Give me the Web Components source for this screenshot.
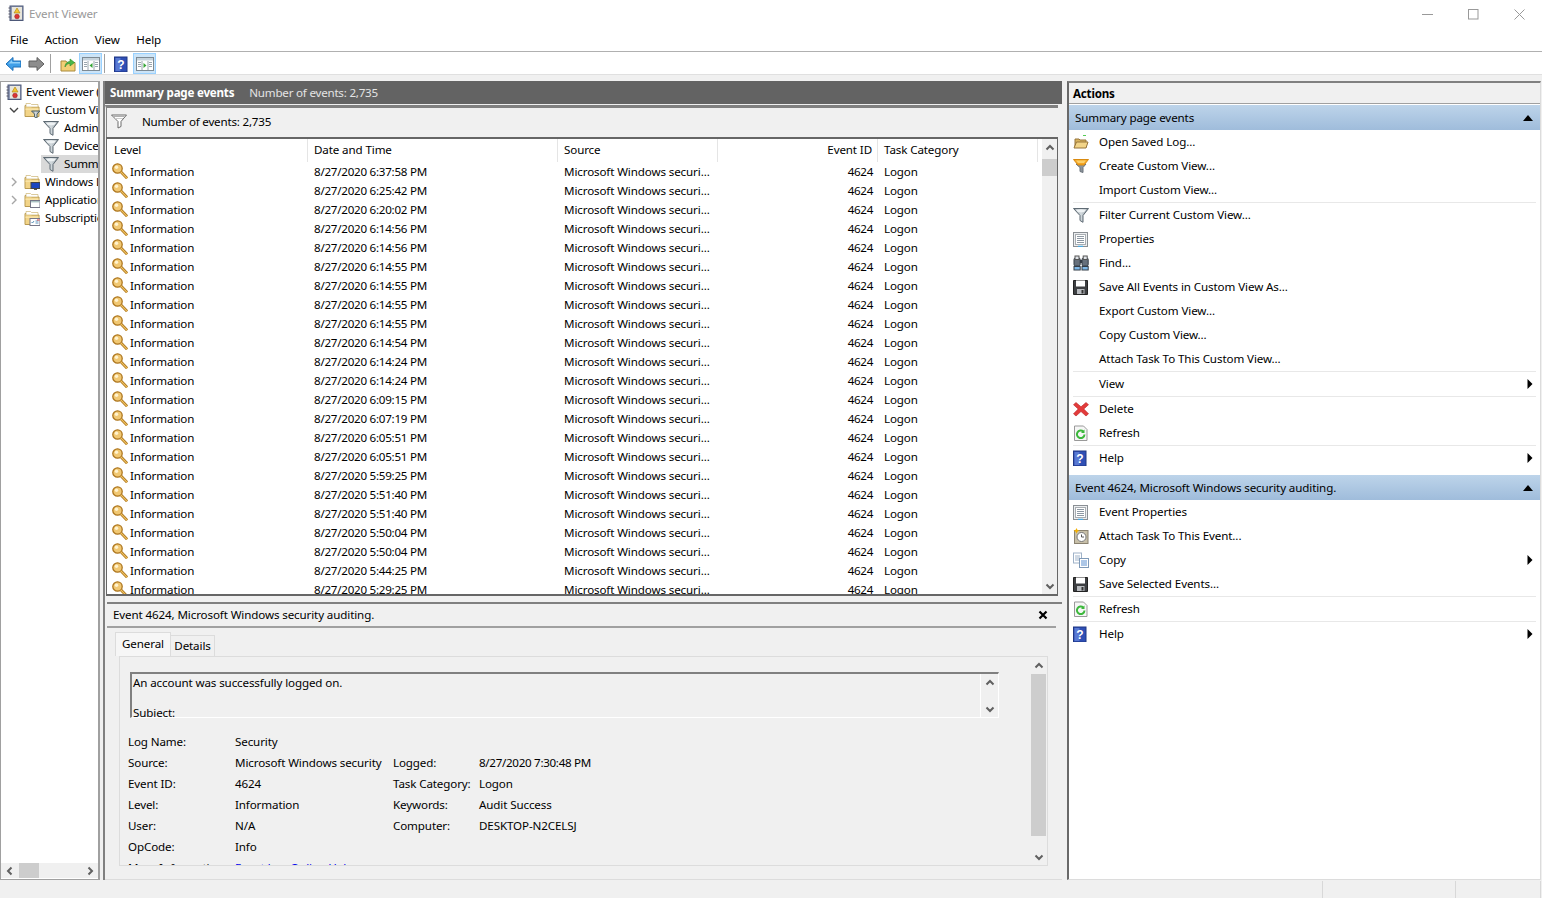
<!DOCTYPE html>
<html><head><meta charset="utf-8"><title>Event Viewer</title>
<style>
html,body{margin:0;padding:0;width:1542px;height:898px;overflow:hidden;background:#f0f0f0;font:11.6px/16px "Noto Sans",sans-serif;color:#000;letter-spacing:-.12px}
ev-app{display:flex}
</style></head><body>
<ev-app></ev-app>
<script>
const GR=`<defs><linearGradient id="fg" x1="0" x2="1" y1="0" y2="0"><stop offset="0" stop-color="#7d8a93"/><stop offset=".5" stop-color="#d5dce0"/><stop offset="1" stop-color="#79858e"/></linearGradient></defs>`;
const FOLD=`<path d="M1 3.500h5l1.500 1.500H15v9.500H1z" fill="#f2d488" stroke="#b99a50"/><path d="M2 5V1.500h4.500l1 1H14V5z" fill="#fff" stroke="#cdb474" stroke-width=".7"/><path d="M1.500 6.500h13v1.500h-13z" fill="#f8e3a6"/>`;
const ICONS={
key:`<circle cx="5.500" cy="5.500" r="4.700" fill="#f1c873" stroke="#ad751c" stroke-width="1.300"/><circle cx="4.500" cy="4.300" r="1.700" fill="#fff3cf"/><path d="M8.800 8.800l6.300 6.500" stroke="#ad751c" stroke-width="2.800"/><path d="M8.800 8.800l6.300 6.500" stroke="#f3c866" stroke-width="1.100"/>`,
funnel:GR+`<path d="M.5 1.500h15L10 8.500v6.800L7 13.500v-5z" fill="url(#fg)" stroke="#5f6b74"/><path d="M2.500 2.500h11L11 5.200H5z" fill="#eef2f4"/>`,
funnelO:`<path d="M3 6h10l-3 3.500v5l-3-1v-4z" fill="#8b949c" stroke="#6c747c"/><path d="M.5 1.500h15L11 7H5z" fill="#f5a623" stroke="#d98a10"/><path d="M3 2.500h10L11 5H5z" fill="#fbd06a"/>`,
funnelL:`<path d="M.5 1h15L10 7.500v5L7 14V7.500z" fill="#fff" stroke="#6a6a6a"/><path d="M2.500 2.500h11" stroke="#b0b0b0"/><path d="M4 4.500h8" stroke="#ccc"/>`,
viewer:`<rect x="2" y="1" width="13" height="14.500" fill="#8d97b3" stroke="#4d5878"/><rect x="4" y="2" width="10" height="12.500" fill="#e8e6dc"/><path d="M9 3l3 5H6z" fill="#f4c430" stroke="#a98310" stroke-width=".6"/><circle cx="9" cy="11.500" r="2.300" fill="#d33" stroke="#922" stroke-width=".6"/><path d="M2.500 3h-2M2.500 6h-2M2.500 9h-2M2.500 12h-2" stroke="#556"/>`,
folderF:FOLD+GR+`<path d="M7.500 9h8.500l-3 3v4l-2.500-1v-3z" fill="url(#fg)" stroke="#566"/>`,
folderW:FOLD+`<rect x="7" y="8.500" width="9" height="6" fill="#1b46c0" stroke="#444"/><path d="M10 15h3v1h-3z" fill="#555"/>`,
folderA:FOLD+`<rect x="6.500" y="8.500" width="9.500" height="7" fill="#fff" stroke="#778"/><path d="M7 9.800h8.500" stroke="#8aa"/>`,
folderS:FOLD+`<rect x="6" y="8.500" width="10" height="7" fill="#fff" stroke="#778"/><path d="M7.500 12l1 1 1.500-2M11.500 11h3M11.500 13h3" stroke="#37a" fill="none" stroke-width=".8"/><path d="M13 9.500h2.500v1H13z" fill="#d33"/>`,
open:`<path d="M2 5h4l1 1h6v7.500H2z" fill="#d9b45f" stroke="#96743a"/><path d="M1 14l2.500-6H15l-2 6z" fill="#f2d488" stroke="#96743a"/><path d="M10 1.500h3" stroke="#5c5"/>`,
props:`<rect x=".5" y="1.500" width="14" height="14" fill="#eceef0" stroke="#8a8f94"/><rect x="2.500" y="3.500" width="10" height="10" fill="#fff" stroke="#a8adb2"/><path d="M4 5.500h7M4 7.500h7M4 9.500h7M4 11.500h7" stroke="#8d98a3"/><path d="M5 15.500h5" stroke="#4aa8e0" stroke-width="1.500"/>`,
find:`<rect x="1" y="3" width="6.200" height="8" rx="1.500" fill="#66707c" stroke="#333c46"/><rect x="9" y="3" width="6.200" height="8" rx="1.500" fill="#66707c" stroke="#333c46"/><path d="M7 5h2v3H7z" fill="#333c46"/><rect x="2" y="1" width="4" height="3.500" fill="#dfe3e8" stroke="#555"/><rect x="10.200" y="1" width="4" height="3.500" fill="#dfe3e8" stroke="#555"/><rect x="1" y="11.500" width="6.200" height="3.500" fill="#7fb8e8" stroke="#333c46"/><rect x="9" y="11.500" width="6.200" height="3.500" fill="#7fb8e8" stroke="#333c46"/>`,
save:`<path d="M.5 1.500h14v14H.5z" fill="#3d3f42" stroke="#222"/><rect x="3" y="1.500" width="9" height="6" fill="#fff"/><rect x="4" y="10" width="7.500" height="5" fill="#b9bcc0"/><rect x="8.500" y="11" width="2" height="3.500" fill="#333"/>`,
del:`<path d="M3 1.500l5 4.300 5-4.300 2.500 2.200L10.800 8l4.700 4.800L13 15l-5-4.500L3 15 .5 12.800 5.200 8 .5 3.700z" fill="#e33b3b" stroke="#b92525" stroke-width=".6"/>`,
refresh:`<path d="M1.500 1h9l3.500 3.500V15.500H1.500z" fill="#f6f6f6" stroke="#999"/><path d="M11.500 9.500a3.800 3.800 0 1 1-1.200-3" fill="none" stroke="#3cb83c" stroke-width="2"/><path d="M11.500 4.500v3.500H8z" fill="#3cb83c"/>`,
help:`<rect x=".5" y="1" width="12.500" height="15" fill="#2f4fb5" stroke="#1f3684"/><rect x="1.500" y="2" width="5" height="13" fill="#5878d2"/><text x="6.800" y="13" font-size="12" font-weight="700" text-anchor="middle" fill="#fff" font-family="Liberation Sans">?</text>`,
task:`<rect x="1.500" y="2.500" width="13.500" height="13" fill="#c7bfa8" stroke="#8a8270"/><circle cx="8.500" cy="9" r="4.500" fill="#fff" stroke="#777"/><path d="M8.500 6.500V9h2.500" fill="none" stroke="#555"/><path d="M3.500 0l1 2 2 .8-2 .8-1 2-1-2-2-.8 2-.8z" fill="#f4b000"/>`,
copy:`<rect x=".5" y="1" width="8" height="10" fill="#fff" stroke="#9fb2c8"/><path d="M2 4h5M2 6h5M2 8h5" stroke="#9fb2c8"/><rect x="6.500" y="6.500" width="9" height="9" fill="#fff" stroke="#7f9ab8"/><path d="M8 9h6M8 11h6M8 13h6" stroke="#5b8fd0"/>`,
back:`<path d="M1 8l7-6.500V5h8v6H8v3.500z" fill="#3f9fe8" stroke="#1d6fb8"/><path d="M3 8l4-4v2h8v1.500H4z" fill="#8fd0fa"/>`,
fwd:`<path d="M16 8L9 1.500V5H1v6h8v3.500z" fill="#8d8d8d" stroke="#5f5f5f"/>`,
up:`<path d="M1 5h5l1 1.500h8V15H1z" fill="#f2cf76" stroke="#a98a3c"/><path d="M5 11c0-4 3-5.500 5-5.500V3l4.500 3.500L10 10V7.500C8 7.500 6 8.500 5 11z" fill="#4ab84a" stroke="#2a8a2a" stroke-width=".6"/>`,
paneL:`<rect x=".5" y="1.500" width="17" height="13" fill="#fff" stroke="#7d8a94"/><path d="M1 2h16v2.500H1z" fill="#c6d3dc"/><path d="M6 5v9M12 5v9" stroke="#9aa6ae"/><path d="M2 6.500h3M2 8.500h3M2 10.500h3M13 6.500h3M13 8.500h3M13 10.500h3" stroke="#9aa6ae"/><path d="M10.500 7v5L7.500 9.500z" fill="#36a636"/>`,
paneR:`<rect x=".5" y="1.500" width="17" height="13" fill="#fff" stroke="#7d8a94"/><path d="M1 2h16v2.500H1z" fill="#c6d3dc"/><path d="M6 5v9M12 5v9" stroke="#9aa6ae"/><path d="M2 6.500h3M2 8.500h3M2 10.500h3M13 6.500h3M13 8.500h3M13 10.500h3" stroke="#9aa6ae"/><path d="M7.500 7v5l3-2.500z" fill="#36a636"/>`
};
function def(name,css,html,init){
  customElements.define(name,class extends HTMLElement{
    constructor(){super();const r=this.attachShadow({mode:'open'});
      r.innerHTML='<style>'+css+'</style>'+(typeof html==='function'?html(this):html);}
    connectedCallback(){if(this._i)return;this._i=1;init&&init(this,this.shadowRoot);}
  });
}
customElements.define('ev-icon',class extends HTMLElement{
  constructor(){super();this.attachShadow({mode:'open'});}
  connectedCallback(){const n=this.getAttribute('name'),w=this.getAttribute('w')||16,h=this.getAttribute('h')||16,vw=this.getAttribute('vw')||16;
    this.shadowRoot.innerHTML=`<style>:host{display:inline-flex;flex:none;width:${w}px;height:${h}px}svg{display:block}</style><svg width="${w}" height="${h}" viewBox="0 0 ${vw} 16">${ICONS[n]||''}</svg>`;}
});
const chev=(d)=>{const p={up:'M1.500 6.500L5 3l3.500 3.500',down:'M1.500 3.500L5 7l3.500-3.500',left:'M6.500 1.500L3 5l3.500 3.500',right:'M3.500 1.500L7 5 3.500 8.500'}[d];
  return `<svg width="10" height="10" viewBox="0 0 10 10"><path d="${p}" fill="none" stroke="#606060" stroke-width="2"/></svg>`};
customElements.define('ev-scrollbar',class extends HTMLElement{
  constructor(){super();this.attachShadow({mode:'open'});}
  connectedCallback(){
    const h=this.hasAttribute('horizontal'),before=this.getAttribute('before')||0,size=this.getAttribute('size')||20;
    const noThumb=this.hasAttribute('nothumb');
    this.shadowRoot.innerHTML=`<style>
    :host{display:flex;flex:none;flex-direction:${h?'row':'column'};${h?'height:15px':'width:15px'};background:#f0f0f0}
    .b{flex:none;${h?'width:17px;height:100%':'height:17px;width:100%'};display:flex;align-items:center;justify-content:center}
    .t{flex:1;display:flex;flex-direction:${h?'row':'column'};min-${h?'width':'height'}:0}
    .s{flex:none;${h?'width':'height'}:${before}px}
    .m{flex:none;${h?'width':'height'}:${size}px;background:#cdcdcd}
    </style><div class="b">${chev(h?'left':'up')}</div><div class="t"><div class="s"></div>${noThumb?'':'<div class="m"></div>'}</div><div class="b">${chev(h?'right':'down')}</div>`;
  }
});
def('ev-titlebar',`:host{display:flex;height:28px;background:#fff;align-items:center;flex:none;padding-left:8px}
 .t{margin-left:5px;color:#999;flex:1}
 .w{display:flex;align-items:center;justify-content:center;width:46px;height:28px}
 .ws{display:flex}`,
 `<ev-icon name="viewer" style="margin-top:-2px"></ev-icon><span class="t">Event Viewer</span><div class="ws">
 <div class="w"><svg width="11" height="11"><path d="M0 5.500h11" stroke="#999"/></svg></div>
 <div class="w"><svg width="11" height="11"><rect x=".5" y=".5" width="9.500" height="9.500" fill="none" stroke="#999"/></svg></div>
 <div class="w"><svg width="11" height="11"><path d="M.5.500l10 10M10.500.500l-10 10" stroke="#999"/></svg></div></div>`);
def('ev-menubar',`:host{display:flex;height:22px;background:#fff;border-bottom:1px solid #b0b0b0;flex:none;padding-left:3px;align-items:center;padding-top:1px;box-sizing:content-box}
 span{padding:0 7px;margin-right:2.600px}`,`<span>File</span><span>Action</span><span>View</span><span>Help</span>`);
def('ev-toolbar',`:host{display:flex;height:21px;padding-top:1px;background:#fff;border-bottom:1px solid #e0e0e0;flex:none;align-items:center;padding-left:5px}
 .sep{width:1px;height:19px;background:#a0a0a0;flex:none}
 .tg{display:flex;width:21px;height:19px;background:#cce4f7;border:1px solid #99d1ff;align-items:center;justify-content:center;flex:none}`,
 `<ev-icon name="back"></ev-icon><ev-icon name="fwd" style="margin-left:7px"></ev-icon><div class="sep" style="margin-left:6px"></div>
 <ev-icon name="up" style="margin-left:9px"></ev-icon><div class="tg" style="margin-left:3px"><ev-icon name="paneL" w="18" vw="18"></ev-icon></div><div class="sep" style="margin-left:2px"></div>
 <ev-icon name="help" style="margin-left:9px"></ev-icon><div class="tg" style="margin-left:3px"><ev-icon name="paneR" w="18" vw="18"></ev-icon></div>`);
def('ev-tree-item',`:host{display:flex;height:18px;align-items:center;flex:none;white-space:nowrap;overflow:hidden}
 .c{width:10px;flex:none;display:flex;justify-content:center;margin-left:8px;margin-right:5px}
 .row{display:flex;align-items:center;height:18px}
 :host([sel]) .row{background:#d9d9d9;flex:1}`,
 (el)=>{const l=+el.getAttribute('level')||0,ch=el.getAttribute('chev');
  const c=ch==='open'?'<svg width="10" height="10"><path d="M1 3l4 4 4-4" fill="none" stroke="#444" stroke-width="1.400"/></svg>':ch==='closed'?'<svg width="10" height="10"><path d="M3 1l4 4-4 4" fill="none" stroke="#a6a6a6" stroke-width="1.400"/></svg>':'';
  const ml=l===0?'<span style="width:5px;flex:none"></span>':l===1?`<div class="c">${c}</div>`:'<span style="width:40px;flex:none"></span>';
  return `${ml}<div class="row"><span style="width:${l===2?2:0}px"></span><ev-icon name="${el.getAttribute('icon')}"></ev-icon><span style="margin-left:${l===0?4:5}px;letter-spacing:-.2px"><slot></slot></span></div>`});
def('ev-tree',`:host{display:flex;flex-direction:column;width:97px;flex:none;background:#fff;border:1px solid #a0a0a0;border-right-width:2px}
 .l{flex:1;min-height:0;padding-top:1px;overflow:hidden;display:flex;flex-direction:column}`,
 `<div class="l"><slot></slot></div><ev-scrollbar horizontal before="1" size="20" style="margin-bottom:1px"></ev-scrollbar>`);
def('ev-event-table',`:host{display:flex;flex:1;min-height:0;background:#fff;overflow:hidden}
 .main{flex:1;min-width:0;display:flex;flex-direction:column;overflow:hidden}
 .r{display:grid;grid-template-columns:201px 250px 160px 160px 160px;flex:none}
 .h{height:23px}.h div{display:flex;align-items:center;padding-left:6px;border-right:1px solid #e5e5e5;box-sizing:border-box;padding-bottom:1px}
 .h div:first-child{padding-left:7px}
 .h div.n{justify-content:flex-end;padding-right:5px}
 .d{height:19px}.d div{display:flex;align-items:center;padding-left:6px;white-space:nowrap;box-sizing:border-box}
 .d div.n{justify-content:flex-end;padding-right:5px;letter-spacing:-.3px}
 .d div.dt{letter-spacing:-.25px}
 .d div.lv{padding-left:5px;gap:2px}
 ev-icon{margin-top:-2px}`,
 `<div class="main"><div class="r h"><div>Level</div><div>Date and Time</div><div>Source</div><div class="n">Event ID</div><div>Task Category</div></div><div id="b"></div></div><ev-scrollbar before="3" size="17"></ev-scrollbar>`,
 (el,r)=>{const T=['6:37:58','6:25:42','6:20:02','6:14:56','6:14:56','6:14:55','6:14:55','6:14:55','6:14:55','6:14:54','6:14:24','6:14:24','6:09:15','6:07:19','6:05:51','6:05:51','5:59:25','5:51:40','5:51:40','5:50:04','5:50:04','5:44:25','5:29:25'];
  r.getElementById('b').innerHTML=T.map(t=>`<div class="r d"><div class="lv"><ev-icon name="key"></ev-icon>Information</div><div class="dt">8/27/2020 ${t} PM</div><div>Microsoft Windows securi...</div><div class="n">4624</div><div>Logon</div></div>`).join('');});
def('ev-details',`:host{display:flex;flex-direction:column;flex:1;min-height:0;border-top:2px solid #808080;margin-top:6px;background:#f0f0f0;overflow:hidden}
 .ttl{display:flex;height:22px;align-items:center;padding-left:6px;flex:none;padding-right:8px;justify-content:space-between;border-bottom:2px solid #a0a0a0;margin-right:6px;box-sizing:content-box}
 .tabs{display:flex;align-items:flex-end;padding-left:8px;height:28px;flex:none}
 .tab{display:flex;align-items:center;box-sizing:border-box}
 .tab.a{width:56px;height:24px;background:#f6f6f6;border:1px solid #dcdcdc;border-bottom:0;justify-content:center;padding-bottom:2px}
 .tab.i{width:44px;height:21px;background:#f0f0f0;border:1px solid #dcdcdc;border-left:0;border-bottom:0;justify-content:center}
 .pane{display:flex;flex:none;height:210px;margin-left:12px;width:929px;border:1px solid #dcdcdc;box-sizing:border-box;overflow:hidden}
 .in{flex:1;min-width:0;overflow:hidden;padding:15px 0 0 8px}
 .desc{display:flex;height:46px;width:869px;margin-left:2px;box-sizing:border-box;border-top:2px solid #808080;border-left:2px solid #808080;border-right:1px solid #fff;border-bottom:1px solid #fff}
 .txt{flex:1;line-height:15px;padding:1px 0 0 1px;overflow:hidden}
 .dv{width:1px;background:#fff;flex:none}
 .grid{display:grid;grid-template-columns:107px 158px 86px auto;grid-auto-rows:21px;margin-top:13px;align-items:center;white-space:nowrap}
 a{color:#0000ee;text-decoration:none}`,
 `<div class="ttl"><span>Event 4624, Microsoft Windows security auditing.</span><svg width="10" height="10"><path d="M1.500 1.500l7 7M8.500 1.500l-7 7" stroke="#000" stroke-width="2.200"/></svg></div>
 <div class="tabs"><div class="tab a">General</div><div class="tab i">Details</div></div>
 <div class="pane"><div class="in">
   <div class="desc"><div class="txt">An account was successfully logged on.<br><br>Subject:</div><div class="dv"></div><ev-scrollbar nothumb style="padding:0 1px;width:15px"></ev-scrollbar></div>
   <div class="grid">
   <span>Log Name:</span><span>Security</span><span></span><span></span>
   <span>Source:</span><span>Microsoft Windows security</span><span>Logged:</span><span style="letter-spacing:-.3px">8/27/2020 7:30:48 PM</span>
   <span>Event ID:</span><span>4624</span><span>Task Category:</span><span>Logon</span>
   <span>Level:</span><span>Information</span><span>Keywords:</span><span>Audit Success</span>
   <span>User:</span><span>N/A</span><span>Computer:</span><span>DESKTOP-N2CELSJ</span>
   <span>OpCode:</span><span>Info</span><span></span><span></span>
   <span>More Information:</span><span><a>Event Log Online Help</a></span><span></span><span></span>
   </div></div>
   <ev-scrollbar before="0" size="162" style="margin-right:1px"></ev-scrollbar></div>`);
def('ev-center',`:host{display:flex;flex-direction:column;flex:none;width:959px;margin-left:3px;border-left:2px solid #808080;box-sizing:border-box}
 .bar{display:flex;height:23px;background:#636363;color:#fff;align-items:center;flex:none;padding-left:5px;letter-spacing:-.22px}
 .bar b{font-weight:700;margin-right:15px}.bar span{color:#e4e4e4}
 .up{display:flex;flex-direction:column;height:491px;flex:none;border-top:3px solid #808080;margin:1px 4px 0 0;border-left:1px solid #f0f0f0;box-sizing:border-box}
 .fb{display:flex;height:27px;padding-bottom:2px;align-items:center;flex:none;padding-left:4px;gap:15px;border-left:1px solid #808080;letter-spacing:-.2px}
 .tb{display:flex;flex:1;min-height:0;border:1px solid #666;border-width:2px 1px 2px 1px}
 .low{flex:1;min-height:0;display:flex;flex-direction:column;padding-left:2px;border-bottom:1px solid #dcdcdc}`,
 `<div class="bar"><b>Summary page events</b><span>Number of events: 2,735</span></div>
 <div class="up"><div class="fb"><ev-icon name="funnelL"></ev-icon><span>Number of events: 2,735</span></div><div class="tb"><ev-event-table></ev-event-table></div></div>
 <div class="low"><ev-details></ev-details></div>`);
def('ev-action',`:host{display:flex;height:24px;align-items:center;flex:none;padding:0 4px;background:#fff;letter-spacing:-.1px}
 :host([sep]){border-top:1px solid #e8e8e8;margin:0 4px;padding:0}
 .i{width:16px;height:16px;flex:none;margin-right:10px}
 .t{flex:1}
 svg{flex:none;margin-right:3px}`,
 (el)=>`<div class="i">${el.getAttribute('icon')?`<ev-icon name="${el.getAttribute('icon')}"></ev-icon>`:''}</div><span class="t"><slot></slot></span>${el.hasAttribute('more')?'<svg width="6" height="10"><path d="M.5 0l5 5-5 5z" fill="#000"/></svg>':''}`);
def('ev-action-group',`:host{display:flex;flex-direction:column;flex:none}
 .h{display:flex;height:25px;align-items:center;justify-content:space-between;padding:0 7px 0 6px;background:linear-gradient(#bdd4ea,#9fbcdb);flex:none}`,
 (el)=>`<div class="h"><span>${el.getAttribute('label')}</span><svg width="10" height="6"><path d="M5 0l5 6H0z" fill="#000"/></svg></div><slot></slot>`);
def('ev-actions',`:host{display:flex;flex-direction:column;flex:1;min-width:0;background:#fff;border-left:2px solid #696969;border-top:2px solid #808080;border-right:1px solid #dcdcdc;border-bottom:1px solid #dcdcdc;margin-right:1px;box-sizing:border-box}
 .t{display:flex;height:19px;padding-top:1px;align-items:center;padding-left:4px;font-weight:700;background:#f0f0f0;border-bottom:1px solid #a0a0a0;flex:none;margin-bottom:1px;letter-spacing:-.2px}`,
 `<div class="t">Actions</div><slot></slot>`);
def('ev-statusbar',`:host{display:flex;flex:1;background:#f0f0f0;justify-content:flex-end;min-height:0;padding-top:1px;box-sizing:border-box}
 div{border-left:1px solid #d8d8d8;box-sizing:border-box}`,
 `<div style="width:133px"></div><div style="width:86px;border-right:1px solid #d8d8d8;margin-right:1px"></div>`);
def('ev-app',`:host{display:flex;flex-direction:column;width:1542px;height:898px}
 .m{display:flex;height:799px;flex:none;margin-top:6px}
 .g{width:5px;flex:none}`,
 `<ev-titlebar></ev-titlebar><ev-menubar></ev-menubar><ev-toolbar></ev-toolbar>
 <div class="m"><ev-tree>
  <ev-tree-item level="0" icon="viewer">Event Viewer (Local)</ev-tree-item>
  <ev-tree-item level="1" chev="open" icon="folderF">Custom Views</ev-tree-item>
  <ev-tree-item level="2" icon="funnel">Administrative Events</ev-tree-item>
  <ev-tree-item level="2" icon="funnel">Device Events</ev-tree-item>
  <ev-tree-item level="2" icon="funnel" sel>Summary page events</ev-tree-item>
  <ev-tree-item level="1" chev="closed" icon="folderW">Windows Logs</ev-tree-item>
  <ev-tree-item level="1" chev="closed" icon="folderA">Applications and Services Logs</ev-tree-item>
  <ev-tree-item level="1" icon="folderS">Subscriptions</ev-tree-item>
 </ev-tree>
 <ev-center></ev-center><div class="g"></div>
 <ev-actions>
  <ev-action-group label="Summary page events">
   <ev-action icon="open">Open Saved Log...</ev-action>
   <ev-action icon="funnelO">Create Custom View...</ev-action>
   <ev-action>Import Custom View...</ev-action>
   <ev-action sep icon="funnel">Filter Current Custom View...</ev-action>
   <ev-action icon="props">Properties</ev-action>
   <ev-action icon="find">Find...</ev-action>
   <ev-action icon="save">Save All Events in Custom View As...</ev-action>
   <ev-action>Export Custom View...</ev-action>
   <ev-action>Copy Custom View...</ev-action>
   <ev-action>Attach Task To This Custom View...</ev-action>
   <ev-action sep more>View</ev-action>
   <ev-action sep icon="del">Delete</ev-action>
   <ev-action icon="refresh">Refresh</ev-action>
   <ev-action sep icon="help" more>Help</ev-action>
  </ev-action-group>
  <div style="height:5px;flex:none"></div>
  <ev-action-group label="Event 4624, Microsoft Windows security auditing.">
   <ev-action icon="props">Event Properties</ev-action>
   <ev-action icon="task">Attach Task To This Event...</ev-action>
   <ev-action icon="copy" more>Copy</ev-action>
   <ev-action icon="save">Save Selected Events...</ev-action>
   <ev-action sep icon="refresh">Refresh</ev-action>
   <ev-action sep icon="help" more>Help</ev-action>
  </ev-action-group>
 </ev-actions></div>
 <ev-statusbar></ev-statusbar>`);
</script>
</body></html>
